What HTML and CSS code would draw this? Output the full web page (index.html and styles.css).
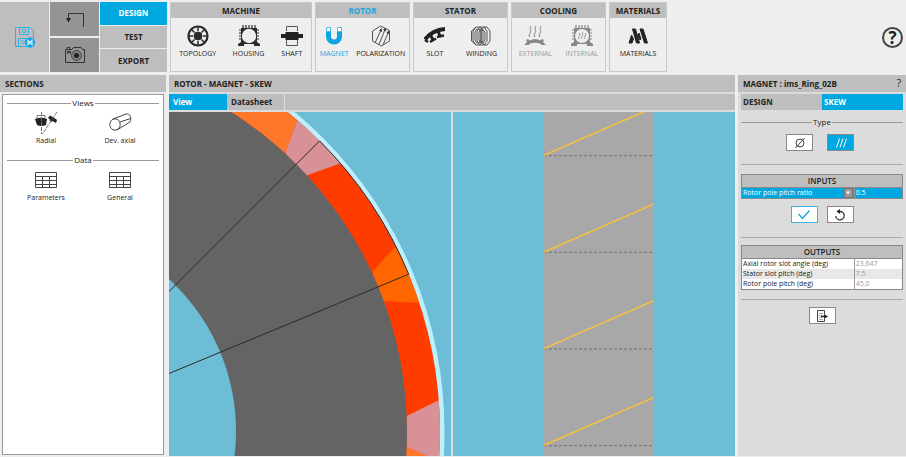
FILE: index.html
```
<!DOCTYPE html>
<html lang="en">
<head>
<meta charset="utf-8">
<title>Rotor - Magnet - Skew</title>
<link rel="stylesheet" href="styles.css">
</head>
<body>
<div class="app">
  <header class="toolbar">
    <nav class="commands">
      <button class="tile tile-save" aria-label="Save">
        <svg width="22" height="22" viewBox="0 0 22 22" fill="none" stroke="#2fb0e4"><path d="M1.500 1.500H16L19.500 4.500V20.500H1.500ZM5.500 1.500V8.500H14.500V1.500M4.500 20.500V12.500H16"/><path stroke-width=".8" d="M6.500 15H12M6.500 17.500H11"/><circle cx="10" cy="5" r="1.800"/><circle cx="16" cy="16.500" r="4.800" fill="#0ba5e1"/><path stroke="#d8eef8" stroke-width="1.200" d="M14 14.500V18.500L16 16.500L18 18.500V14.500L16 16.500Z"/></svg>
      </button>
      <div class="stack">
        <button class="tile tile-dark" aria-label="Back">
          <svg width="20" height="18" viewBox="0 0 20 18" fill="none" stroke="#333"><path d="M18.500 17V3.500H3.500V8"/><path fill="#222" stroke="none" d="M1 8H6L3.500 12.500Z"/></svg>
        </button>
        <button class="tile tile-dark" aria-label="Snapshot">
          <svg width="22" height="18" viewBox="0 0 22 18" fill="none" stroke="#333"><path d="M1.500 3.500H8L9.500 1.500H17L18.500 3.500H20.500V16.500H1.500ZM3 3V1.500H6V3"/><rect x="3.500" y="5.500" width="3" height="1.500"/><circle cx="12.500" cy="9.500" r="4.800"/><circle cx="12.500" cy="9.500" r="2.500" fill="#222"/></svg>
        </button>
      </div>
      <div class="stack modes">
        <button class="mode active">DESIGN</button>
        <button class="mode">TEST</button>
        <button class="mode">EXPORT</button>
      </div>
    </nav>

    <section class="group group-machine">
      <h2>MACHINE</h2>
      <div class="tools">
        <button class="tool">
          <svg width="22" height="22" viewBox="0 0 22 22" fill="none" stroke="#2b2b2b"><circle cx="11" cy="11" r="9.500" stroke-width="2.200"/><circle cx="11" cy="11" r="4" fill="#2b2b2b"/><g stroke-width="1.500"><path d="M11 6V2M11 16V20M6 11H2M16 11H20M7.500 7.500L4.500 4.500M14.500 14.500L17.500 17.500M7.500 14.500L4.500 17.500M14.500 7.500L17.500 4.500"/></g></svg>
          TOPOLOGY</button>
        <button class="tool">
          <svg width="22" height="22" viewBox="0 0 22 22" fill="none" stroke="#2b2b2b"><path fill="#2b2b2b" fill-rule="evenodd" stroke="none" d="M3 3H19V17L22 19V21H16V19H6V21H0V19L3 17ZM11 3.800A7.200 7.200 0 1 0 11 18.200A7.200 7.200 0 1 0 11 3.800Z"/><path stroke-width="1.200" d="M5 3V0M8 3V0M11 3V0M14 3V0M17 3V0M3 5H1M3 8H1M3 11H1M3 14H1M19 5H21M19 8H21M19 11H21M19 14H21"/></svg>
          HOUSING</button>
        <button class="tool">
          <svg width="22" height="22" viewBox="0 0 22 22" fill="none" stroke="#555"><path d="M5.500 6V1.500H16.500V6M5.500 15V20.500H16.500V15"/><path fill="#222" stroke="none" d="M4.500 7H17.500V9H22V13H17.500V15H4.500V13H0V9H4.500Z"/></svg>
          SHAFT</button>
      </div>
    </section>

    <section class="group group-pair group-active">
      <h2>ROTOR</h2>
      <div class="tools">
        <button class="tool tool-active">
          <svg width="22" height="22" viewBox="0 0 22 22" fill="none"><path stroke="#0ba5e1" stroke-width="5" d="M5.500 6V11.500A5.500 5.500 0 0 0 16.500 11.500V6"/><path fill="#fff" stroke="#4dbbe8" d="M3.500 2.500H7.500V6.500H3.500ZM14.500 2.500H18.500V6.500H14.500Z"/></svg>
          MAGNET</button>
        <button class="tool">
          <svg width="22" height="22" viewBox="0 0 22 22" fill="none" stroke="#555"><path d="M2.500 6L10.500 1L19.500 5.500V16L11.500 21L2.500 16ZM5 18L11 5M9 19.500L15 4.500M13 20L18.500 7"/><path fill="#333" stroke="none" d="M11.700 3L12 7L9 5.500ZM15.700 2.500L16 6.500L13 5ZM19 5.500L19 9L16.500 7.800Z"/></svg>
          POLARIZATION</button>
      </div>
    </section>

    <section class="group group-pair">
      <h2>STATOR</h2>
      <div class="tools">
        <button class="tool">
          <svg width="22" height="22" viewBox="0 0 22 22" fill="none" stroke="#222"><path stroke-width="4" d="M1 14.500Q8 5 21 4"/><path stroke-width="3" d="M6 9L9 15M14 6L16 11"/><path stroke-width="2.500" d="M6 17L12 13.500M13 12L20 10.500M1 15L4 17"/></svg>
          SLOT</button>
        <button class="tool">
          <svg width="22" height="22" viewBox="0 0 22 22" fill="none" stroke="#444" stroke-width=".9"><path d="M6 2H10L13 6V16L10 20H6L3 16V6ZM8 4H9L11 7V15L9 18H7L5 15V7L7 4ZM10 2H14L17 6V16L14 20H10L7 16V6ZM12 4L15 7V15L13 18H11L9 15V7L11 4ZM14 2H17L20 6V16L17 20H14L11 16V6ZM6 2L1.500 6V16L6 20"/></svg>
          WINDING</button>
      </div>
    </section>

    <section class="group group-pair">
      <h2>COOLING</h2>
      <div class="tools">
        <button class="tool tool-off" disabled>
          <svg width="22" height="22" viewBox="0 0 22 22" fill="none" stroke="#999"><path stroke-width="1.100" d="M6 12C3 9 8 8 6.500 5.500Q5.500 4 7 1M11 12C8 9 13 8 11.500 5.500Q10.500 4 12 1M16 12C13 9 18 8 16.500 5.500Q15.500 4 17 1"/><path fill="#888" stroke="none" d="M0 20L3 17L2 15L4 14L5.500 15.500Q11 12.500 16.500 15.500L18 14L20 15L19 17L22 20H17V19Q11 16.500 5 19V20Z"/></svg>
          EXTERNAL</button>
        <button class="tool tool-off" disabled>
          <svg width="22" height="22" viewBox="0 0 22 22" fill="none" stroke="#888"><path fill="#888" fill-rule="evenodd" stroke="none" d="M3 3H19V17L22 19V21H16V19H6V21H0V19L3 17ZM11 4A7 7 0 1 0 11 18A7 7 0 1 0 11 4Z"/><path stroke-width="1.200" d="M5 3V0M8 3V0M11 3V0M14 3V0M17 3V0M3 5H1M3 8H1M3 11H1M3 14H1M19 5H21M19 8H21M19 11H21M19 14H21"/><path stroke-width=".8" d="M8 14C6.500 12 9.500 11 8.500 8M11 14C9.500 12 12.500 11 11.500 7.500M14 14C12.500 12 15.500 11 14.500 8"/></svg>
          INTERNAL</button>
      </div>
    </section>

    <section class="group group-single">
      <h2>MATERIALS</h2>
      <div class="tools">
        <button class="tool">
          <svg width="22" height="22" viewBox="0 0 22 22" fill="#222" stroke="#222" stroke-linejoin="round"><path d="M5.500 4H8.500L12.500 18H9.500ZM13 4H16L20.500 18H17.500ZM4.500 10L6.500 14L5 18H2ZM12 8L14 14L13 15L10.800 10.500Z"/></svg>
          MATERIALS</button>
      </div>
    </section>

    <button class="help">?</button>
  </header>

  <main class="workspace">
    <aside class="sections">
      <h1 class="bar">SECTIONS</h1>
      <div class="section-box">
        <h3 class="rule-title">Views</h3>
        <div class="shortcuts">
          <button class="shortcut">
            <svg width="24" height="24" viewBox="0 0 24 24" fill="none" stroke="#777"><path fill="#222" stroke="none" d="M1 8Q7 5.500 13 8L12 14Q7 16 3 14Z"/><path d="M3 8V4.500H11V8" /><path fill="#222" stroke="none" d="M14 7L16 4.500Q20 6 23 9L22 12L18.500 10L17.500 11L15.500 9.500L16 8.500Z"/><path stroke-dasharray="4 1" d="M7.500 1V23M23 1L8.500 23"/></svg>
            Radial</button>
          <button class="shortcut">
            <svg width="24" height="24" viewBox="0 0 24 24" fill="none" stroke="#444"><ellipse cx="7" cy="13.500" rx="5.200" ry="5.700"/><path d="M5 8L18 3C22 2 24 7 22 11L9 19M12 11L22.500 7.500"/></svg>
            Dev. axial</button>
        </div>
        <h3 class="rule-title">Data</h3>
        <div class="shortcuts">
          <button class="shortcut">
            <svg width="24" height="24" viewBox="0 0 24 24" fill="none" stroke="#444"><path d="M1.500 4.500H22.500V19.500H1.500ZM1.500 8.500H22.500M1.500 12.500H22.500M1.500 16.500H22.500M8.500 8.500V19.500M15.500 8.500V19.500"/></svg>
            Parameters</button>
          <button class="shortcut">
            <svg width="24" height="24" viewBox="0 0 24 24" fill="none" stroke="#444"><path d="M1.500 4.500H22.500V19.500H1.500ZM1.500 8.500H22.500M1.500 12.500H22.500M1.500 16.500H22.500M8.500 8.500V19.500M15.500 8.500V19.500"/></svg>
            General</button>
        </div>
      </div>
    </aside>

    <section class="center">
      <h1 class="bar">ROTOR - MAGNET - SKEW</h1>
      <div class="tabs">
        <button class="tab active">View</button>
        <button class="tab">Datasheet</button>
      </div>
      <div class="views">
        <svg class="view" viewBox="169 112 282 344" preserveAspectRatio="xMinYMid slice" role="img" aria-label="Radial view">
          <defs>
            <clipPath id="ring"><path clip-rule="evenodd" d="M-382 431.500A411 411 0 1 0 440 431.500A411 411 0 1 0 -382 431.500ZM-349 431.500A378 378 0 1 0 407 431.500A378 378 0 1 0 -349 431.500Z"/></clipPath>
          </defs>
          <circle cx="29" cy="431.500" r="415.500" fill="#bdeffd"/>
          <circle cx="29" cy="431.500" r="411" fill="#ff3c00"/>
          <g clip-path="url(#ring)">
            <path fill="#ff772a" d="M169 60H318.300L285.700 152L260 180L169 110Z"/>
            <path fill="#d99198" d="M303 104L285.700 152L290 182L308 175L358 157Z"/>
            <path fill="#ff6600" d="M419 221L373 271L370 300L384 301L440 304Z"/>
            <path fill="#d99198" d="M455 392L407 416L390 425V447H407L450 467Z"/>
            <path fill="#ff772a" d="M400 444L407 447L450 467V480H400Z"/>
          </g>
          <circle cx="29" cy="431.500" r="378" fill="#646464"/>
          <circle cx="29" cy="431.500" r="207" fill="#6dbdd7"/>
          <path fill="none" stroke="#2a2a2a" d="M29 431.500L319.600 140.900A411 411 0 0 1 408.700 274.200Z"/>
        </svg>
        <svg class="view" viewBox="453 112 282 344" preserveAspectRatio="xMidYMid slice" role="img" aria-label="Developed axial view">
          <path fill="#a8a8a8" d="M543.500 0H653.500V600H543.500Z"/>
          <path fill="none" stroke="#707070" stroke-dasharray="3 2" d="M544 155.700H653M544 252.300H653M544 349H653M544 445.700H653"/>
          <path fill="none" stroke="#f3bf45" stroke-width="1.600" d="M543.500 155.500L653.500 107.500M543.500 252.200L653.500 204.200M543.500 348.800L653.500 300.800M543.500 445.500L653.500 397.500"/>
        </svg>
      </div>
    </section>

    <aside class="props">
      <h1 class="bar props-title"><span>MAGNET : ims_Ring_02B</span><button class="hint">?</button></h1>
      <div class="props-tabs">
        <button class="tab">DESIGN</button>
        <button class="tab active">SKEW</button>
      </div>
      <div class="block type-block">
        <h3 class="rule-title">Type</h3>
        <div class="row row-wide">
          <button class="choice" aria-label="No skew"><svg width="12" height="12" viewBox="0 0 12 12" fill="none" stroke="#444"><circle cx="6" cy="6" r="4"/><path d="M1.500 11L10.500 1"/></svg></button>
          <button class="choice choice-on" aria-label="Skewed"><svg width="12" height="12" viewBox="0 0 12 12" fill="none" stroke="#fff"><path d="M1.500 10.500L4.500 1.500M5 10.500L8 1.500M8.500 10.500L11.500 1.500"/></svg></button>
        </div>
      </div>
      <form class="block inputs-block" onsubmit="return false">
        <table class="grid">
          <colgroup><col class="col-name"><col></colgroup>
          <thead><tr><th colspan="2">INPUTS</th></tr></thead>
          <tbody><tr class="selected">
            <td><div class="name-cell"><label for="ratio">Rotor pole pitch ratio</label><button type="button" class="drop" aria-label="Options"><svg width="6" height="4" viewBox="0 0 6 4"><path fill="#fff" d="M1 .5H5L3 3.500Z"/></svg></button></div></td>
            <td><input id="ratio" value="0.5"></td>
          </tr></tbody>
        </table>
        <div class="row">
          <button class="choice choice-ok" aria-label="Apply"><svg width="14" height="12" viewBox="0 0 14 12" fill="none" stroke="#1a9fd6" stroke-width="1.300"><path d="M1.500 5L5.500 9.500L12.500 1.500"/></svg></button>
          <button type="reset" class="choice" aria-label="Reset"><svg width="12" height="12" viewBox="0 0 12 12" fill="none" stroke="#333" stroke-width="1.300"><path d="M5 2.500H6A4.200 4.200 0 1 1 1.800 7"/><path fill="#222" stroke="none" d="M6 0V5L2.500 2.500Z"/></svg></button>
        </div>
      </form>
      <div class="block">
        <table class="grid">
          <colgroup><col class="col-name"><col></colgroup>
          <thead><tr><th colspan="2">OUTPUTS</th></tr></thead>
          <tbody>
            <tr><td>Axial rotor slot angle (deg)</td><td class="value">23.647</td></tr>
            <tr class="even"><td>Stator slot pitch (deg)</td><td class="value">7.5</td></tr>
            <tr><td>Rotor pole pitch (deg)</td><td class="value">45.0</td></tr>
          </tbody>
        </table>
      </div>
      <div class="row">
        <button class="choice" aria-label="Export"><svg width="12" height="12" viewBox="0 0 12 12" fill="none" stroke="#444"><path d="M8.500 4V.5H1.500V11.500H8.500V9"/><path stroke="#aaa" d="M3 3.500H7M3 5.500H6M3 7.500H6M3 9.500H7"/><path fill="#222" stroke="none" d="M5 5.700H8V4L12 6.500L8 9V7.300H5Z"/></svg></button>
      </div>
    </aside>
  </main>
</div>
</body>
</html>
```
FILE: styles.css
```
* { box-sizing: border-box; }

body {
  margin: 0;
  background: #eee;
  color: #222;
  font: 7px/10px "Open Sans", "Noto Sans", sans-serif;
}

h1, h2, h3 { margin: 0; font-size: 8px; font-weight: 700; }

button {
  display: flex;
  align-items: center;
  justify-content: center;
  margin: 0;
  padding: 0;
  border: 0;
  background: none;
  color: inherit;
  font: inherit;
}

svg { display: block; flex: none; }

.app {
  display: flex;
  flex-direction: column;
  min-height: 100vh;
  padding-bottom: 1px;
}

/* Toolbar */
.toolbar { display: flex; gap: 3px; padding: 2px 3px 3px 0; }

.commands {
  display: grid;
  grid-template-columns: 49px 49px 67px;
  gap: 1px;
  height: 70px;
}

.stack { display: grid; gap: 2px; }
.modes { gap: 1px; }
.tile { background: #bebebe; }
.tile-dark { background: #949494; }
.mode { background: #bebebe; font-size: 8px; font-weight: 700; }

.active { background: #00a8e1; color: #fff; }

.group { border: 1px solid #c8c8c8; }
.group h2 {
  background: #bebebe;
  line-height: 15px;
  text-align: center;
}
.group-machine { width: 142px; }
.group-pair { width: 95px; }
.group-single { width: 58px; }
.group-active h2 { color: #1fa5dc; }

.tools { display: flex; justify-content: space-around; padding-top: 7px; }
.tool { flex-direction: column; gap: 2px; }
.tool-active { color: #1fa5dc; }
.tool-off { color: #999; }

.help {
  width: 21px;
  height: 21px;
  margin: 25px 0 0 auto;
  border: 2px solid #444;
  border-radius: 50%;
  font-size: 17px;
  font-weight: 700;
}

/* Workspace */
.workspace {
  display: grid;
  flex: 1;
  grid-template-columns: 166px minmax(0, 1fr) 168px;
  gap: 3px;
}

.bar {
  padding: 0 5px;
  background: #bebebe;
  line-height: 17px;
}

.sections, .center, .props { display: flex; flex-direction: column; }
.sections { gap: 2px; }

.section-box {
  flex: 1;
  margin: 0 2px 1px;
  padding: 2px 4px;
  border: 1px solid #999;
  background: #fff;
}

.rule-title {
  display: flex;
  align-items: center;
  gap: 1px;
  font-weight: 400;
  line-height: 12px;
}
.rule-title::before,
.rule-title::after {
  content: "";
  flex: 1;
  border-top: 1px solid #999;
}

.shortcuts { display: grid; grid-template-columns: 1fr 1fr; padding: 1px 2px 0; }
.shortcut {
  flex-direction: column;
  justify-content: flex-start;
  gap: 1px;
  height: 44px;
  padding-top: 1px;
}

/* Drawing area */
.center { gap: 2px; background: #dcdcdc; }
.tabs { display: flex; background: #bebebe; }
.tab {
  justify-content: flex-start;
  width: 58px;
  padding: 0 4px;
  font-size: 8px;
  font-weight: 700;
  line-height: 16px;
}
.tabs .tab:last-child { border-right: 1px solid #dcdcdc; }

.views {
  display: grid;
  flex: 1;
  grid-template-columns: 1fr 1fr;
  gap: 2px;
}
.view { width: 100%; height: 100%; min-height: 0; background: #6dbdd7; }

/* Properties */
.props { background: #dcdcdc; }
.props-title { display: flex; justify-content: space-between; }
.hint { font-size: 10px; font-weight: 400; line-height: 17px; }

.props-tabs {
  display: grid;
  grid-template-columns: 1fr 1fr;
  margin: 2px 3px 6px;
  background: #bebebe;
}
.props-tabs .tab { width: auto; padding: 0 2px; }

.block {
  margin: 0 3px 7px;
  padding-bottom: 9px;
  border-bottom: 1px solid #aaa;
}
.type-block { padding-bottom: 13px; margin-bottom: 9px; }
.inputs-block { padding-bottom: 14px; }

.row { display: flex; justify-content: center; gap: 9px; }
.row-wide { gap: 14px; padding: 6px 4px 0 0; }
.inputs-block .row { padding-top: 7px; }

.choice {
  width: 27px;
  height: 17px;
  border: 1px solid #888;
  background: #fff;
}
.choice-on { background: #00a8e1; }
.choice-ok { border-color: #3bb3e2; }

.grid {
  width: 100%;
  border: 1px solid #888;
  border-collapse: collapse;
  table-layout: fixed;
  background: #fff;
}
.grid th {
  padding: 0;
  border-bottom: 1px solid #888;
  background: #bebebe;
  font-size: 8px;
  font-weight: 600;
  line-height: 12px;
}
.col-name { width: 70%; }
.grid td { padding: 0 1px; white-space: nowrap; }
.grid td + td { border-left: 1px solid #999; }
.grid .value { color: #999; }
.even { background: #e8e8e8; }
.selected { background: #00a8e1; color: #fff; }

.name-cell { display: flex; justify-content: space-between; }
.drop { width: 9px; border: 1px solid #777; background: #999; }

.grid input {
  display: block;
  width: 100%;
  height: 10px;
  padding: 0;
  border: 0;
  background: none;
  color: inherit;
  font: inherit;
}
```
